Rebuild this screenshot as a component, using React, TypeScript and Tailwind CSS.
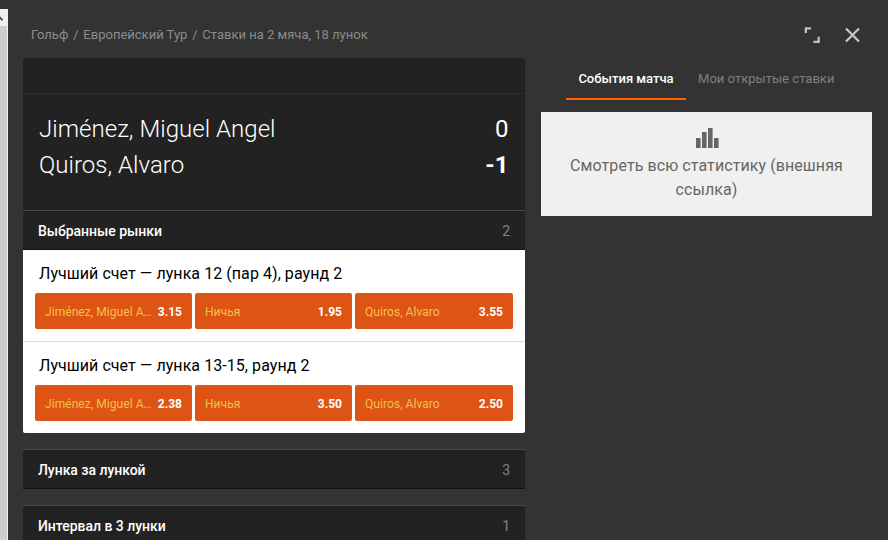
import React from "react";

type Outcome = { name: string; odds: string };
type Market = { title: string; outcomes: Outcome[] };

const markets: Market[] = [
  {
    title: "Лучший счет — лунка 12 (пар 4), раунд 2",
    outcomes: [
      { name: "Jiménez, Miguel A…", odds: "3.15" },
      { name: "Ничья", odds: "1.95" },
      { name: "Quiros, Alvaro", odds: "3.55" },
    ],
  },
  {
    title: "Лучший счет — лунка 13-15, раунд 2",
    outcomes: [
      { name: "Jiménez, Miguel A…", odds: "2.38" },
      { name: "Ничья", odds: "3.50" },
      { name: "Quiros, Alvaro", odds: "2.50" },
    ],
  },
];

function SectionHeader({ title, count }: { title: string; count: number }) {
  return (
    <div className="flex h-10 items-center justify-between border-t border-b border-t-[#484848] border-b-[#111] bg-[#222] px-[15px] pt-[2px] text-sm leading-5">
      <span className="font-medium tracking-[-0.03px] text-white">{title}</span>
      <span className="text-[#828282]">{count}</span>
    </div>
  );
}

function OutcomeButton({ name, odds }: Outcome) {
  return (
    <button className="flex h-9 min-w-0 items-center justify-between rounded-[2px] bg-[#dd5415] px-[10px] pt-[2px] text-xs leading-4">
      <span className="tracking-[0.005em] whitespace-nowrap text-[#f3c14b]">{name}</span>
      <span className="font-bold text-white">{odds}</span>
    </button>
  );
}

function MarketRow({ title, outcomes }: Market) {
  return (
    <div className="h-[92px] border-b border-[#dcdcdc] px-3 pt-3 last:h-[91px] last:border-b-0">
      <h3 className="pl-1 text-base leading-6 tracking-[0.06px] text-black">{title}</h3>
      <div className="mt-[7px] grid grid-cols-[157px_157px_158px] gap-[3px]">
        {outcomes.map((o) => (
          <OutcomeButton key={o.name} {...o} />
        ))}
      </div>
    </div>
  );
}

export default function App() {
  return (
    <div className="flex h-[540px] w-[888px] overflow-hidden bg-[#333] font-['Roboto','Noto_Sans',sans-serif]">
      <div className="mt-[9px] w-2 shrink-0 bg-[#f0f0f0]">
        <svg className="block" width="8" height="17" viewBox="0 0 8 17" fill="none">
          <path d="M-3 11 L-0.3 8.3 L2.6 11.2" stroke="#555" strokeWidth="2" />
        </svg>
        <div className="h-[520px] w-[7px] bg-[#cdcdcd]" />
      </div>

      <main className="ml-[15px] w-[502px] shrink-0">
        <nav className="flex h-[58px] items-start pt-[25px] pl-2 text-[13px] leading-5 whitespace-pre text-[#8c8c8c]">
          <span>Гольф</span>
          <span className="w-[15px] text-center">/</span>
          <span>Европейский Тур</span>
          <span className="w-[15px] text-center">/</span>
          <span>Ставки на 2 мяча, 18 лунок</span>
        </nav>

        <section className="h-[152px] overflow-hidden rounded-t-[2px] bg-[#222]">
          <div className="h-9 border-b border-[#303030]" />
          <div className="pt-[17px] pr-[16.5px] pl-4 text-2xl leading-9 text-white">
            <div className="flex justify-between">
              <span className="font-light tracking-[0.04px]">Jiménez, Miguel Angel</span>
              <span>0</span>
            </div>
            <div className="flex justify-between">
              <span className="font-light tracking-[0.04px]">Quiros, Alvaro</span>
              <span className="font-bold">-1</span>
            </div>
          </div>
        </section>

        <SectionHeader title="Выбранные рынки" count={2} />
        <div className="rounded-b-[2px] bg-white">
          {markets.map((m) => (
            <MarketRow key={m.title} {...m} />
          ))}
        </div>

        <div className="mt-4 flex flex-col gap-4">
          <SectionHeader title="Лунка за лункой" count={3} />
          <SectionHeader title="Интервал в 3 лунки" count={1} />
        </div>
      </main>

      <aside className="ml-4 w-[331px] shrink-0">
        <div className="flex h-[58px] items-start justify-end gap-[25px] pt-[27px] pr-3">
          <button aria-label="Развернуть">
            <svg className="block" width="16" height="16" viewBox="0 0 16 16" fill="#c0c0c0">
              <path d="M0.7 0.3H7V2.6H3V6H0.7zM15.8 9.7V16H9.5V13.7H13.5V9.7z" />
            </svg>
          </button>
          <button aria-label="Закрыть">
            <svg className="block" width="15" height="16" viewBox="0 0 15 16" fill="none" stroke="#c8c8c8" strokeWidth="2.2">
              <path d="M1 1.5L14 14.5M14 1.5L1 14.5" />
            </svg>
          </button>
        </div>
        <div className="flex h-[42px] pl-[25px] text-[13px] leading-5">
          <div className="w-[120px] border-b-2 border-[#ff6200] pt-[11px] text-center font-medium whitespace-nowrap text-white">
            События матча
          </div>
          <div className="pt-[11px] pl-3 tracking-[0.03px] whitespace-nowrap text-[#808080]">Мои открытые ставки</div>
        </div>
        <div className="mt-3 flex h-[104px] flex-col items-center bg-[#f0f0f0] pt-4 text-center text-[#666]">
          <svg className="ml-px block" width="23" height="20" viewBox="0 0 23 20" fill="#666">
            <path d="M0 10h4.6v10H0zM6 4h4.6v16H6zM12 0h4.6v20h-4.6zM18 10h4.6v10h-4.6z" />
          </svg>
          <p className="mt-[6px] w-[300px] text-base leading-6 tracking-[0.08px]">Смотреть всю статистику (внешняя ссылка)</p>
        </div>
      </aside>
    </div>
  );
}
